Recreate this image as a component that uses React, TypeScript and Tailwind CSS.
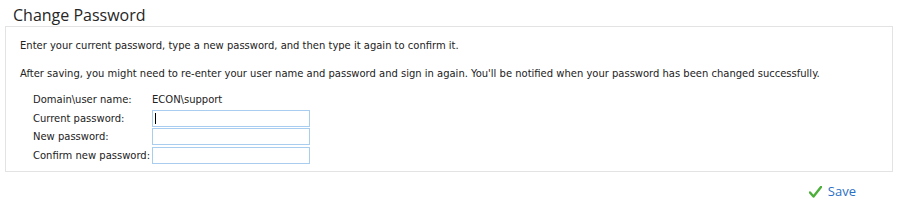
export default function App() {
  const rows = [
    { label: "Current password:", caret: true },
    { label: "New password:" },
    { label: "Confirm new password:" },
  ];
  return (
    <div className="h-[201px] w-[900px] bg-white text-[#222]">
      <div className="pl-[13px] pt-[5px] font-['Segoe_UI','Open_Sans',sans-serif] text-[16px] leading-[21px] text-[#262626]">
        Change Password
      </div>
      <div className="ml-[5px] h-[146px] w-[888px] border border-[#e3e3e3] pl-[14px] pt-[9px] font-['Tahoma','DejaVu_Sans_Condensed',sans-serif] text-[11.1px] text-[#222]">
        <p className="leading-[20px] whitespace-nowrap">
          Enter your current password, type a new password, and then type it again to confirm it.
        </p>
        <p className="mt-[8px] leading-[20px] whitespace-nowrap">
          After saving, you might need to re-enter your user name and password and sign in again. You'll be notified when your password has been changed successfully.
        </p>
        <div className="ml-[13px] mt-[7px] grid grid-cols-[119px_158px] gap-y-[1.5px] items-center whitespace-nowrap">
          <span className="leading-[17px]">Domain\user name:</span>
          <span className="leading-[17px]">ECON\support</span>
          {rows.map((r) => (
            <div key={r.label} className="contents">
              <span className="leading-[17px]">{r.label}</span>
              <div className="relative h-[17px] w-[158px] border border-[#a9cdee] bg-white">
                {r.caret ? <span className="absolute left-[2px] top-[2px] h-[11px] w-px bg-black" /> : null}
              </div>
            </div>
          ))}
        </div>
      </div>
      <div className="flex justify-end pr-[44px] pt-[10px]">
        <button type="button" className="flex items-center gap-[6px] font-['Segoe_UI','Open_Sans',sans-serif] text-[13px] text-[#2b6fc6]">
          <svg width="13" height="12" viewBox="0 0 13 12" aria-hidden>
            <path d="M1 6.5 4.5 10.5 12 1" stroke="#4caf3a" strokeWidth="2.4" fill="none" strokeLinecap="round" strokeLinejoin="round" />
          </svg>
          Save
        </button>
      </div>
    </div>
  );
}
